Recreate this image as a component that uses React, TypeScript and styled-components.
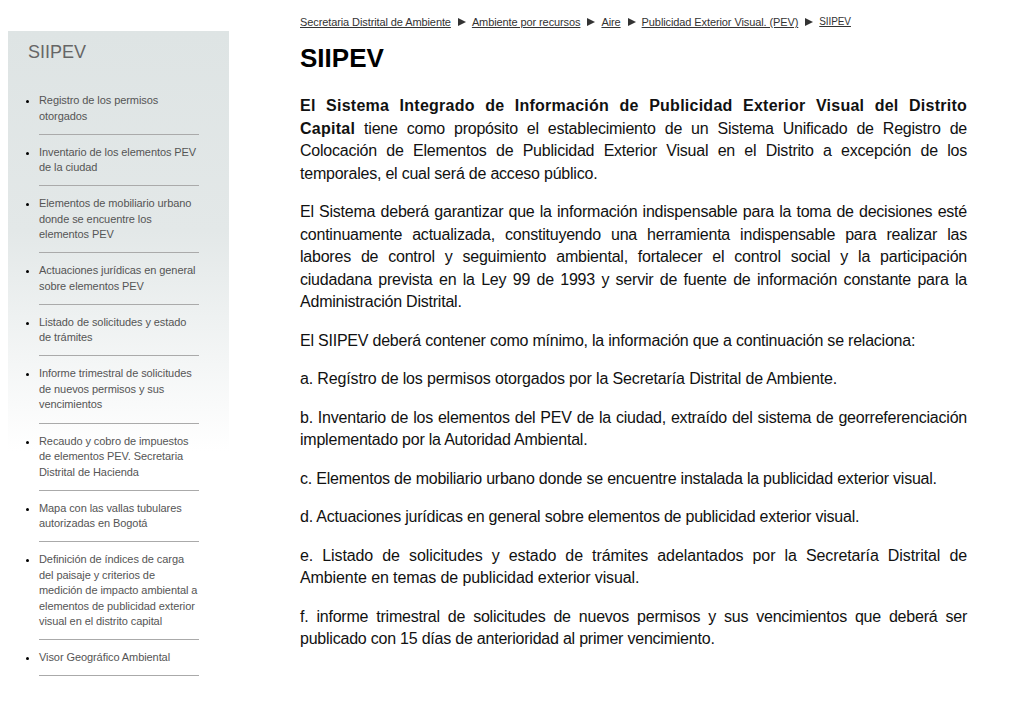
import React from "react";
import styled, { createGlobalStyle } from "styled-components";

const Global = createGlobalStyle`
  html, body { margin: 0; padding: 0; background: #fff; }
  body { margin: 8px; font-family: "Liberation Sans", Arial, sans-serif; }
`;

const Page = styled.div`
  display: flex;
  align-items: flex-start;
  width: 1004px;
`;

const Sidebar = styled.aside`
  width: 221px;
  margin-top: 23px;
  padding: 9px 0 0 0;
  min-height: 640px;
  background: linear-gradient(to bottom, #dee4e4 0px, #e3e8e8 200px, #ffffff 420px);
  box-sizing: border-box;
`;

const SideTitle = styled.h2`
  margin: 0 0 19px 20px;
  font-family: "Liberation Sans", Arial, sans-serif;
  font-weight: normal;
  font-size: 18px;
  line-height: 24px;
  color: #666;
`;

const SideList = styled.ul`
  list-style: disc outside;
  margin: 0;
  padding: 0 30px 0 31px;
  color: #000;
`;

const SideItem = styled.li`
  padding: 10px 0 9.6px 0;
  border-bottom: 1px solid #aaa;
  font-size: 11px;
  line-height: 15.5px;
  letter-spacing: -0.08px;
`;

const SideLink = styled.a`
  color: #555;
  text-decoration: none;
`;

const Main = styled.main`
  width: 667px;
  margin-left: 71px;
  padding-top: 7px;
  color: #000;
`;

const Crumbs = styled.nav`
  display: flex;
  align-items: center;
  font-size: 11px;
  line-height: 14px;
  color: #333;
  letter-spacing: -0.1px;
`;

const Crumb = styled.a<{ $small?: boolean }>`
  color: #333;
  text-decoration: underline;
  font-size: ${(p) => (p.$small ? "10px" : "11px")};
`;

const Sep = styled.span`
  display: inline-block;
  width: 0;
  height: 0;
  border-left: 8px solid #333;
  border-top: 4.5px solid transparent;
  border-bottom: 4.5px solid transparent;
  margin: 0 6px 0 7px;
`;

const Title = styled.h1`
  margin: 14px 0 22px 0;
  font-size: 26px;
  line-height: 30px;
  font-weight: bold;
  color: #000;
`;

const Para = styled.p<{ $tracking?: number }>`
  margin: 0 0 16px 0;
  font-size: 16px;
  line-height: 22.5px;
  text-align: justify;
  color: #111;
  letter-spacing: ${(p) => (p.$tracking ?? -0.22)}px;
`;

const Strong = styled.strong`
  letter-spacing: 0.25px;
`;

const items = [
  "Registro de los permisos otorgados",
  "Inventario de los elementos PEV de la ciudad",
  "Elementos de mobiliario urbano donde se encuentre los elementos PEV",
  "Actuaciones jurídicas en general sobre elementos PEV",
  "Listado de solicitudes y estado de trámites",
  "Informe trimestral de solicitudes de nuevos permisos y sus vencimientos",
  "Recaudo y cobro de impuestos de elementos PEV. Secretaria Distrital de Hacienda",
  "Mapa con las vallas tubulares autorizadas en Bogotá",
  "Definición de índices de carga del paisaje y criterios de medición de impacto ambiental a elementos de publicidad exterior visual en el distrito capital",
  "Visor Geográfico Ambiental",
];

const crumbs = [
  "Secretaria Distrital de Ambiente",
  "Ambiente por recursos",
  "Aire",
  "Publicidad Exterior Visual. (PEV)",
];

export default function App() {
  return (
    <>
      <Global />
      <Page>
        <Sidebar>
          <SideTitle>SIIPEV</SideTitle>
          <SideList>
            {items.map((t) => (
              <SideItem key={t}>
                <SideLink href="#">{t}</SideLink>
              </SideItem>
            ))}
          </SideList>
        </Sidebar>
        <Main>
          <Crumbs>
            {crumbs.map((c) => (
              <React.Fragment key={c}>
                <Crumb href="#">{c}</Crumb>
                <Sep aria-hidden="true" />
              </React.Fragment>
            ))}
            <Crumb href="#" $small>SIIPEV</Crumb>
          </Crumbs>
          <Title>SIIPEV</Title>
          <Para>
            <Strong>
              El Sistema Integrado de Información de Publicidad Exterior Visual del Distrito Capital
            </Strong>{" "}
            tiene como propósito el establecimiento de un Sistema Unificado de Registro de
            Colocación de Elementos de Publicidad Exterior Visual en el Distrito a excepción de los
            temporales, el cual será de acceso público.
          </Para>
          <Para>
            El Sistema deberá garantizar que la información indispensable para la toma de decisiones
            esté continuamente actualizada, constituyendo una herramienta indispensable para realizar
            las labores de control y seguimiento ambiental, fortalecer el control social y la
            participación ciudadana prevista en la Ley 99 de 1993 y servir de fuente de información
            constante para la Administración Distrital.
          </Para>
          <Para>
            El SIIPEV deberá contener como mínimo, la información que a continuación se relaciona:
          </Para>
          <Para $tracking={-0.15}>
            a. Regístro de los permisos otorgados por la Secretaría Distrital de Ambiente.
          </Para>
          <Para>
            b. Inventario de los elementos del PEV de la ciudad, extraído del sistema de
            georreferenciación implementado por la Autoridad Ambiental.
          </Para>
          <Para>
            c. Elementos de mobiliario urbano donde se encuentre instalada la publicidad exterior
            visual.
          </Para>
          <Para>d. Actuaciones jurídicas en general sobre elementos de publicidad exterior visual.</Para>
          <Para $tracking={-0.1}>
            e. Listado de solicitudes y estado de trámites adelantados por la Secretaría Distrital de
            Ambiente en temas de publicidad exterior visual.
          </Para>
          <Para>
            f. informe trimestral de solicitudes de nuevos permisos y sus vencimientos que deberá ser
            publicado con 15 días de anterioridad al primer vencimiento.
          </Para>
        </Main>
      </Page>
    </>
  );
}
